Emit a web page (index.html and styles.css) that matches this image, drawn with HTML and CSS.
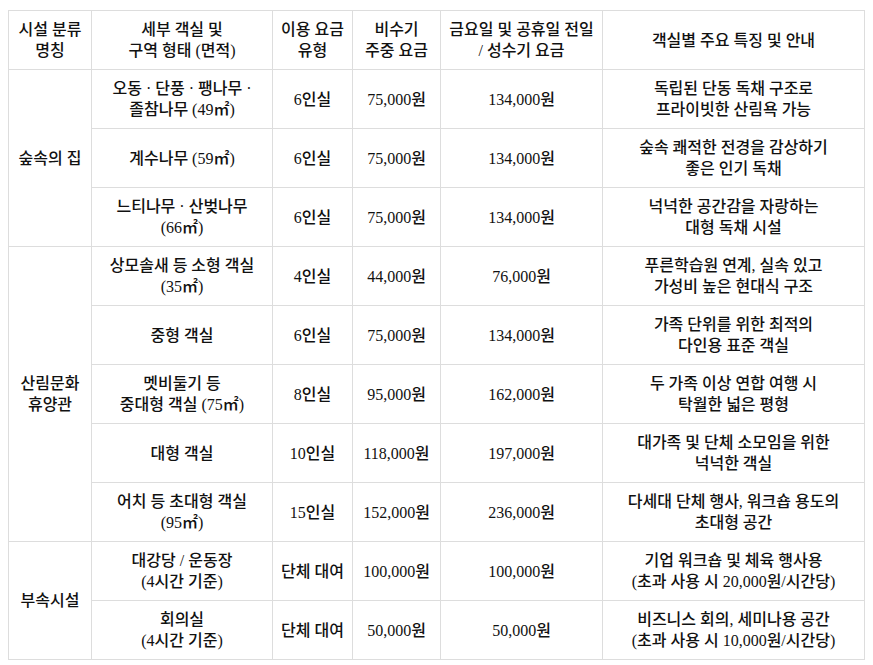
FILE: index.html
```html
<!DOCTYPE html>
<html lang="ko">
<head>
<meta charset="utf-8">
<title>시설 요금표</title>
<link rel="stylesheet" href="styles.css">
</head>
<body>
<table class="rates">
  <colgroup>
    <col class="c1"><col class="c2"><col class="c3"><col class="c4"><col class="c5"><col class="c6">
  </colgroup>
  <thead>
    <tr>
      <th>시설 분류<br>명칭</th>
      <th>세부 객실 및<br>구역 형태 (면적)</th>
      <th>이용 요금<br>유형</th>
      <th>비수기<br>주중 요금</th>
      <th>금요일 및 공휴일 전일<br>/ 성수기 요금</th>
      <th>객실별 주요 특징 및 안내</th>
    </tr>
  </thead>
  <tbody>
    <tr>
      <td rowspan="3">숲속의 집</td>
      <td>오동 · 단풍 · 팽나무 ·<br>졸참나무 (49<span class="unit">㎡</span>)</td>
      <td>6인실</td>
      <td>75,000원</td>
      <td>134,000원</td>
      <td>독립된 단동 독채 구조로<br>프라이빗한 산림욕 가능</td>
    </tr>
    <tr>
      <td>계수나무 (59<span class="unit">㎡</span>)</td>
      <td>6인실</td>
      <td>75,000원</td>
      <td>134,000원</td>
      <td>숲속 쾌적한 전경을 감상하기<br>좋은 인기 독채</td>
    </tr>
    <tr>
      <td>느티나무 · 산벚나무<br>(66<span class="unit">㎡</span>)</td>
      <td>6인실</td>
      <td>75,000원</td>
      <td>134,000원</td>
      <td>넉넉한 공간감을 자랑하는<br>대형 독채 시설</td>
    </tr>
    <tr>
      <td rowspan="5">산림문화<br>휴양관</td>
      <td>상모솔새 등 소형 객실<br>(35<span class="unit">㎡</span>)</td>
      <td>4인실</td>
      <td>44,000원</td>
      <td>76,000원</td>
      <td>푸른학습원 연계, 실속 있고<br>가성비 높은 현대식 구조</td>
    </tr>
    <tr>
      <td>중형 객실</td>
      <td>6인실</td>
      <td>75,000원</td>
      <td>134,000원</td>
      <td>가족 단위를 위한 최적의<br>다인용 표준 객실</td>
    </tr>
    <tr>
      <td>멧비둘기 등<br>중대형 객실 (75<span class="unit">㎡</span>)</td>
      <td>8인실</td>
      <td>95,000원</td>
      <td>162,000원</td>
      <td>두 가족 이상 연합 여행 시<br>탁월한 넓은 평형</td>
    </tr>
    <tr>
      <td>대형 객실</td>
      <td>10인실</td>
      <td>118,000원</td>
      <td>197,000원</td>
      <td>대가족 및 단체 소모임을 위한<br>넉넉한 객실</td>
    </tr>
    <tr>
      <td>어치 등 초대형 객실<br>(95<span class="unit">㎡</span>)</td>
      <td>15인실</td>
      <td>152,000원</td>
      <td>236,000원</td>
      <td>다세대 단체 행사, 워크숍 용도의<br>초대형 공간</td>
    </tr>
    <tr>
      <td rowspan="2">부속시설</td>
      <td>대강당 / 운동장<br>(4시간 기준)</td>
      <td>단체 대여</td>
      <td>100,000원</td>
      <td>100,000원</td>
      <td>기업 워크숍 및 체육 행사용<br>(초과 사용 시 20,000원/시간당)</td>
    </tr>
    <tr>
      <td>회의실<br>(4시간 기준)</td>
      <td>단체 대여</td>
      <td>50,000원</td>
      <td>50,000원</td>
      <td>비즈니스 회의, 세미나용 공간<br>(초과 사용 시 10,000원/시간당)</td>
    </tr>
  </tbody>
</table>
</body>
</html>
```

FILE: styles.css
```css
html, body {
  background: #ffffff;
}
body {
  margin: 8px;
  font-family: "Liberation Serif", "Noto Sans CJK KR", serif;
  font-size: 16px;
  font-weight: 500;
  color: #111111;
}
.rates {
  width: 100%;
  margin-top: 2px;
  border-collapse: collapse;
  table-layout: fixed;
}
.rates th,
.rates td {
  border: 1px solid #dddddd;
  padding: 8px 4px;
  line-height: 21px;
  height: 42px;
  text-align: center;
  vertical-align: middle;
  font-weight: 500;
  word-break: keep-all;
}
.unit {
  font-family: "DejaVu Serif", "Liberation Serif", "Noto Sans CJK KR", serif;
}
.c1 { width: 83px; }
.c2 { width: 181px; }
.c3 { width: 80px; }
.c4 { width: 88px; }
.c5 { width: 162px; }
.c6 { width: auto; }
```
